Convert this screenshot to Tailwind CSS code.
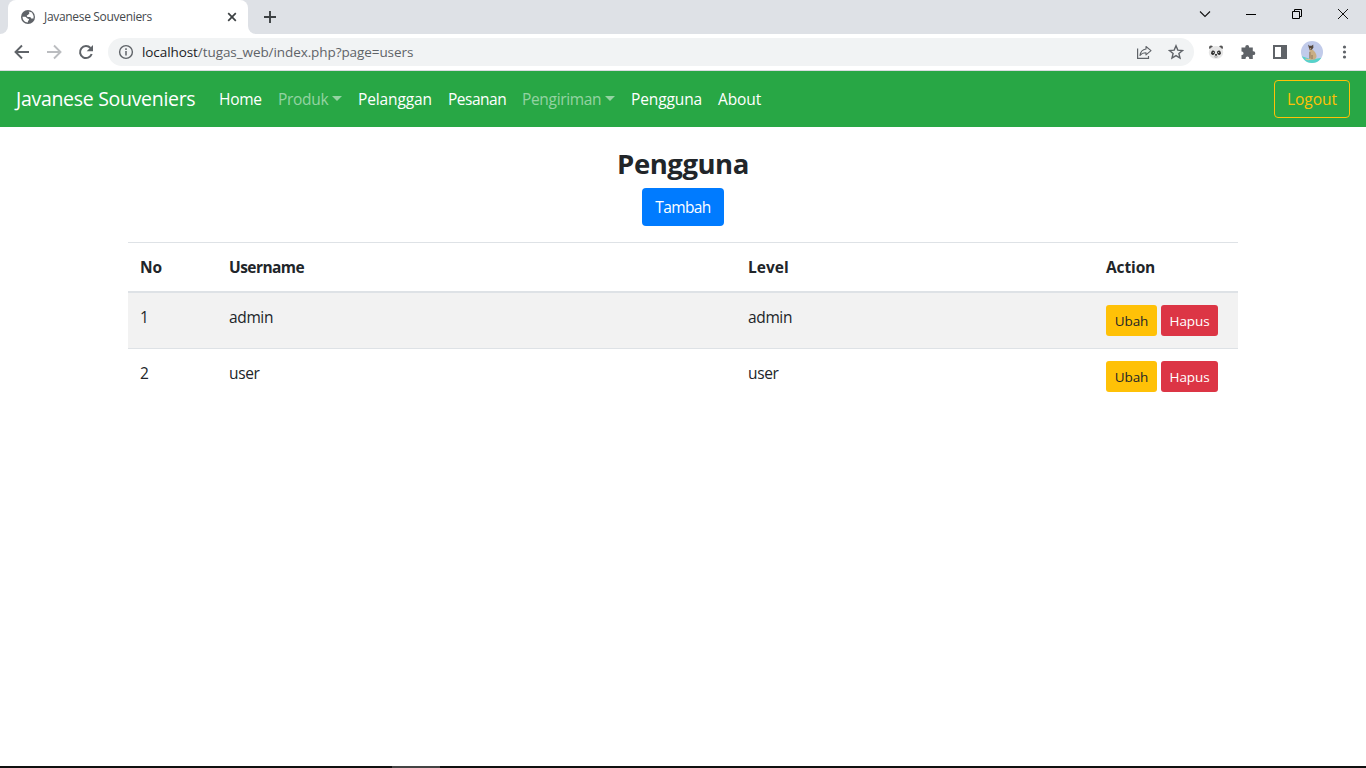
<!DOCTYPE html>
<html lang="id">
<head>
<meta charset="utf-8">
<title>Javanese Souveniers</title>
<script src="https://cdn.jsdelivr.net/npm/@tailwindcss/browser@4"></script>
</head>
<body class="h-screen overflow-hidden bg-white font-['Open_Sans','Noto_Sans',sans-serif] text-[15.5px] leading-6 text-[#212529] flex flex-col">
<!-- Tab strip -->
<div class="h-[34px] shrink-0 bg-[#dee1e6] flex">
  <div class="w-2 bg-white"><div class="h-full bg-[#dee1e6] rounded-br-lg"></div></div>
  <div class="w-60 bg-[#dee1e6]"><div class="h-full bg-white rounded-t-lg flex items-center pl-3 pr-2.5">
    <svg class="size-4 shrink-0" viewBox="0 0 16 16"><circle cx="8" cy="8" r="7" fill="#5f6368"/><path d="M8.600 2.500 12 3.600 13.600 7 13.500 9.600H11.800C10.800 9.600 11 7.900 9.800 7.900H7.600C6.600 7.900 6.500 6.400 7.500 6.100 8.300 5.900 8.100 5.200 8.900 4.900 9.600 4.600 9.500 3.700 8.600 2.500z" fill="#fff"/><path d="M2.500 7.800H5.200C6.300 7.800 6.800 9.600 8 9.800 9.300 10 9.300 11 8.500 11.500 7.700 11.900 8 12.800 7.800 13.500 4.700 13.400 2.600 11 2.500 7.800z" fill="#fff"/></svg>
    <span class="ml-2 text-xs text-[#45494d] tracking-[-0.32px] whitespace-nowrap">Javanese Souveniers</span>
    <svg class="ml-auto size-3 mr-0" viewBox="0 0 12 12"><path d="M2.200 2.200l7.600 7.600M9.800 2.200 2.200 9.800" stroke="#3c4043" stroke-width="1.700"/></svg>
  </div></div>
  <div class="w-2 bg-white"><div class="h-full bg-[#dee1e6] rounded-bl-lg"></div></div>
  <svg class="ml-2 mt-[11px] size-3" viewBox="0 0 12 12"><path d="M6 0v12M0 6h12" stroke="#3c4043" stroke-width="1.900"/></svg>
  <div class="ml-auto flex w-[184px] items-start pt-2">
    <svg class="w-[46px] h-3" viewBox="0 0 46 12"><path d="M18 3.500l5 5 5-5" fill="none" stroke="#111" stroke-width="1.100"/></svg>
    <svg class="w-[46px] h-3" viewBox="0 0 46 12"><path d="M18 6.500h10" stroke="#000"/></svg>
    <svg class="w-[46px] h-3" viewBox="0 0 46 12"><path d="M18.500 3.500h7v7h-7zM20.500 3.500v-2h7v7h-2" fill="none" stroke="#000"/></svg>
    <svg class="w-[46px] h-3" viewBox="0 0 46 12"><path d="M18 1l10 10M28 1 18 11" stroke="#111"/></svg>
  </div>
</div>
<!-- Toolbar -->
<div class="h-[37px] shrink-0 bg-white border-b border-[#dadce0] flex items-center">
  <div class="flex w-[108px] shrink-0 pl-3.5 gap-4">
    <svg class="size-4" viewBox="0 0 16 16"><path d="M15 8H2M8 1.500 1.500 8 8 14.500" fill="none" stroke="#5f6368" stroke-width="1.900"/></svg>
    <svg class="size-4" viewBox="0 0 16 16"><path d="M1 8h13M8 1.500 14.500 8 8 14.500" fill="none" stroke="#bbbdc0" stroke-width="1.900"/></svg>
    <svg class="size-4" viewBox="0 0 16 16"><path d="M13.700 10A6 6 0 1 1 12.500 4" fill="none" stroke="#5f6368" stroke-width="2"/><path d="M15 1v6.300H8.700z" fill="#5f6368"/></svg>
  </div>
  <div class="w-[1086px] h-7 rounded-full bg-[#f1f3f4] flex items-center pl-2.5 pr-2.5">
    <svg class="size-4" viewBox="0 0 16 16"><circle cx="8" cy="8" r="6.400" fill="none" stroke="#5f6368" stroke-width="1.400"/><path d="M8 7v4.500M8 4.300v1.600" stroke="#5f6368" stroke-width="1.500"/></svg>
    <span class="ml-2 text-[13.5px] tracking-[-0.08px] text-[#5f6368] whitespace-nowrap"><span class="text-[#202124]">localhost</span>/tugas_web/index.php?page=users</span>
    <svg class="ml-auto size-4" viewBox="0 0 16 16"><path d="M1.600 4.500v9.900h10.900V12" fill="none" stroke="#5f6368" stroke-width="1.200"/><path d="M10 2.500l5 4.200-5 4.200V8.800c-2.500 0-4.500.7-6 2.700.4-3.500 2.300-6 6-6.500z" fill="none" stroke="#5f6368" stroke-width="1.100" stroke-linejoin="round"/></svg>
    <svg class="ml-4 size-4" viewBox="0 0 16 16"><path d="M8 1.800l1.800 4.300 4.700.4-3.600 3 1.100 4.600-4-2.500-4 2.500 1.100-4.600-3.600-3 4.700-.4z" fill="none" stroke="#5f6368" stroke-width="1.400"/></svg>
  </div>
  <svg class="ml-3.5 size-4" viewBox="0 0 16 16"><circle cx="3" cy="3.600" r="2" fill="#555"/><circle cx="13" cy="3.600" r="2" fill="#555"/><ellipse cx="8" cy="8.400" rx="7.200" ry="6.400" fill="#e6e6e6"/><ellipse cx="5" cy="8.800" rx="1.900" ry="2.200" fill="#333" transform="rotate(25 5 8.800)"/><ellipse cx="11" cy="8.800" rx="1.900" ry="2.200" fill="#333" transform="rotate(-25 11 8.800)"/><ellipse cx="8" cy="10.900" rx="1.200" ry=".8" fill="#222"/><path d="M6.300 12.700q1.700 1 3.400 0" fill="none" stroke="#777" stroke-width=".7"/><circle cx="5.300" cy="8.500" r=".5" fill="#fff"/><circle cx="10.700" cy="8.500" r=".5" fill="#fff"/></svg>
  <svg class="ml-4 size-4" viewBox="0 0 16 16"><path d="M1.500 3.500H5.300V2.800a1.900 1.900 0 0 1 3.800 0v.7h3.700v3.800h.6a1.900 1.900 0 0 1 0 3.800h-.6V15H9.200v-.7a1.800 1.800 0 0 0-3.600 0v.7H1.500v-3.900h.6a1.900 1.900 0 0 0 0-3.700h-.6z" fill="#5f6368"/></svg>
  <svg class="ml-4 size-4" viewBox="0 0 16 16"><path d="M1 1h14v14H1zM3 3v10h6V3z" fill="#5f6368" fill-rule="evenodd"/></svg>
  <svg class="ml-[13px] size-[22px]" viewBox="0 0 22 22"><clipPath id="avatar"><circle cx="11" cy="11" r="11"/></clipPath><g clip-path="url(#avatar)"><path d="M0 0h22v22H0z" fill="#c1cbea"/><path d="M0 15l11 3.500 11-2V22H0z" fill="#56d3ca"/><path d="M8.500 8l3 .5c2 1.500 4.300 4.500 4 7.500l-1.500 2.500-5.500.3z" fill="#c9ae84"/><path d="M7 3.500l1.300 1.300h2.500L12.200 3.500l.2 3.300-1.700 2-2.400-.3z" fill="#54473d"/><path d="M8.300 7h2l-.8 1.600z" fill="#bfa17a"/><path d="M8.900 11v6.500M11 14v4" stroke="#7d684f" stroke-width=".8"/><path d="M4.500 17.800q2 1.300 5 .4" fill="none" stroke="#d9c094" stroke-width="1.200"/></g></svg>
  <svg class="ml-[13px] size-4" viewBox="0 0 16 16" fill="#5f6368"><circle cx="8.500" cy="3" r="1.600"/><circle cx="8.500" cy="8" r="1.600"/><circle cx="8.500" cy="13" r="1.600"/></svg>
</div>
<!-- Site navigation -->
<nav class="h-14 shrink-0 bg-[#28a745] text-white flex items-center px-4 whitespace-nowrap">
  <a class="w-[179px] mr-6 text-[19.5px] leading-7 tracking-[-0.3px]">Javanese Souveniers</a>
  <div class="flex gap-4 tracking-[-0.12px]">
    <a class="w-[43px] tracking-[-0.25px]">Home</a>
    <a class="w-16 text-white/50 flex items-center justify-between tracking-[-0.3px]">Produk<span class="border-x-[5px] border-t-[5px] border-x-transparent border-t-white/50 -mt-0.5"></span></a>
    <a class="w-[74px]">Pelanggan</a>
    <a class="w-[58px] tracking-[-0.5px]">Pesanan</a>
    <a class="w-[93px] text-white/50 flex items-center justify-between tracking-[-0.33px]">Pengiriman<span class="border-x-[5px] border-t-[5px] border-x-transparent border-t-white/50 -mt-0.5"></span></a>
    <a class="w-[71px]">Pengguna</a>
    <a class="w-11">About</a>
  </div>
  <button class="ml-auto w-[76px] h-[38px] rounded border border-[#ffc107] text-[#ffc107]">Logout</button>
</nav>
<!-- Users -->
<main class="grow w-[1110px] mx-auto pt-5 flex flex-col items-center">
  <h2 class="text-[27.5px] leading-[34px] font-bold tracking-[-0.45px] mb-[7px]">Pengguna</h2>
  <button class="w-[82px] h-[38px] rounded bg-[#007bff] text-white tracking-[-0.6px] mb-4">Tambah</button>
  <table class="w-full table-fixed text-left border-separate border-spacing-0">
    <colgroup><col class="w-[89px]"><col class="w-[519px]"><col class="w-[358px]"><col class="w-36"></colgroup>
    <thead><tr class="h-[51px] *:border-t *:border-b-2 *:border-[#dee2e6] *:px-3 *:pb-px *:pt-0"><th>No</th><th class="tracking-[-0.55px]">Username</th><th>Level</th><th class="tracking-[-0.12px]">Action</th></tr></thead>
    <tbody class="align-top tracking-[-0.36px]">
      <tr class="h-[55px] bg-[#f2f2f2] *:px-3 *:pt-3"><td>1</td><td>admin</td><td>admin</td><td><div class="flex gap-1 text-[13.5px] tracking-[-0.1px]"><button class="w-[51px] h-[31px] rounded-[3px] bg-[#ffc107]">Ubah</button><button class="w-[57px] h-[31px] rounded-[3px] bg-[#dc3545] text-white">Hapus</button></div></td></tr>
      <tr class="h-14 *:border-t *:border-[#dee2e6] *:px-3 *:pt-3"><td>2</td><td>user</td><td>user</td><td><div class="flex gap-1 text-[13.5px] tracking-[-0.1px]"><button class="w-[51px] h-[31px] rounded-[3px] bg-[#ffc107]">Ubah</button><button class="w-[57px] h-[31px] rounded-[3px] bg-[#dc3545] text-white">Hapus</button></div></td></tr>
    </tbody>
  </table>
</main>
<!-- Taskbar edge -->
<div class="h-0.5 shrink-0 bg-[#101010] flex"><div class="ml-[392px] w-12 bg-[#444]"></div></div>
</body>
</html>
